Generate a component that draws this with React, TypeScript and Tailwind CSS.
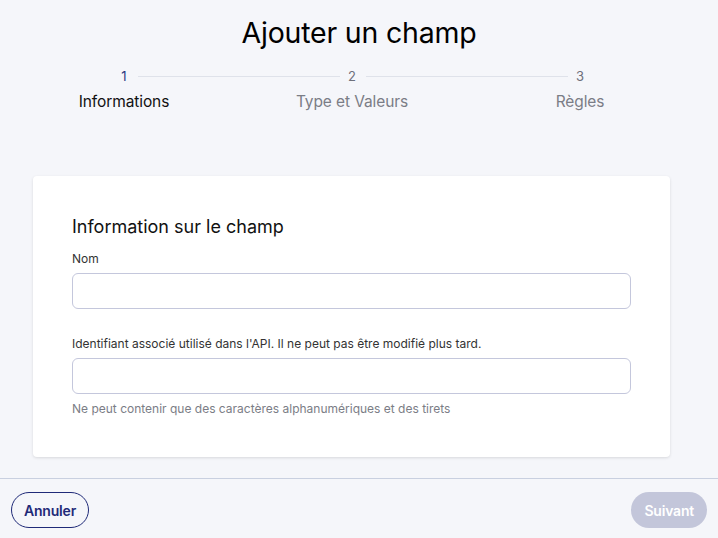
const steps = [
  { n: 1, label: "Informations", active: true },
  { n: 2, label: "Type et Valeurs", active: false },
  { n: 3, label: "Règles", active: false },
];

export default function App() {
  return (
    <div className="flex flex-col h-[538px] w-[718px] bg-[#f5f6fa] font-['Inter',sans-serif] text-black">
      {/* Header */}
      <div className="flex flex-col items-center pt-[14px]">
        <h1 className="text-[28.5px] leading-[38px] font-normal tracking-[-0.2px]">Ajouter un champ</h1>
      </div>
      {/* Stepper */}
      <div className="grid grid-cols-3 pl-[10px] pr-[24px] mt-[15px]">
        {steps.map((s, i) => (
          <div key={s.n} className="relative flex flex-col items-center">
            <span className={`text-[13px] leading-[18px] ${s.active ? "text-[#2a3580]" : "text-[#6e707a]"}`}>{s.n}</span>
            {i < steps.length - 1 && (
              <div className="absolute top-[9px] left-[calc(50%+14px)] w-[202px] h-px bg-[#dfe2ea]" />
            )}
            <span className={`mt-[7px] text-[15.5px] leading-[20px] tracking-[-0.1px] ${s.active ? "text-[#111]" : "text-[#7b7d86]"}`}>{s.label}</span>
          </div>
        ))}
      </div>

      {/* Card */}
      <div className="mx-[33px] mt-[64px] w-[637px] bg-white rounded-[4px] shadow-[0_1px_3px_rgba(0,0,0,0.12)] px-[39px] pt-[39px] pb-[40px]">
        <h2 className="text-[18px] leading-[24px] text-[#111]">Information sur le champ</h2>
        <label className="block mt-[12px] text-[12px] leading-[16px] text-[#333]">Nom</label>
        <input className="block mt-[6px] w-full h-[36px] rounded-[6px] border border-[#c4c7dc] bg-white outline-none" />
        <label className="block mt-[27px] text-[12px] leading-[16px] text-[#333]">
          Identifiant associé utilisé dans l'API. Il ne peut pas être modifié plus tard.
        </label>
        <input className="block mt-[6px] w-full h-[36px] rounded-[6px] border border-[#c4c7dc] bg-white outline-none" />
        <p className="mt-[7px] text-[12px] leading-[16px] text-[#7b7d86]">
          Ne peut contenir que des caractères alphanumériques et des tirets
        </p>
      </div>

      {/* Footer */}
      <div className="mt-auto border-t border-[#c9d0e0] flex items-start justify-between px-[11px] pt-[13px] h-[60px]">
        <button className="h-[36px] px-[12px] rounded-full border border-[#1f2a78] text-[#1f2a78] text-[14px] font-semibold tracking-[-0.2px] bg-transparent">
          Annuler
        </button>
        <button className="h-[36px] px-[13px] rounded-full bg-[#c3c6da] text-white text-[14px] font-semibold tracking-[-0.2px]">
          Suivant
        </button>
      </div>
    </div>
  );
}
